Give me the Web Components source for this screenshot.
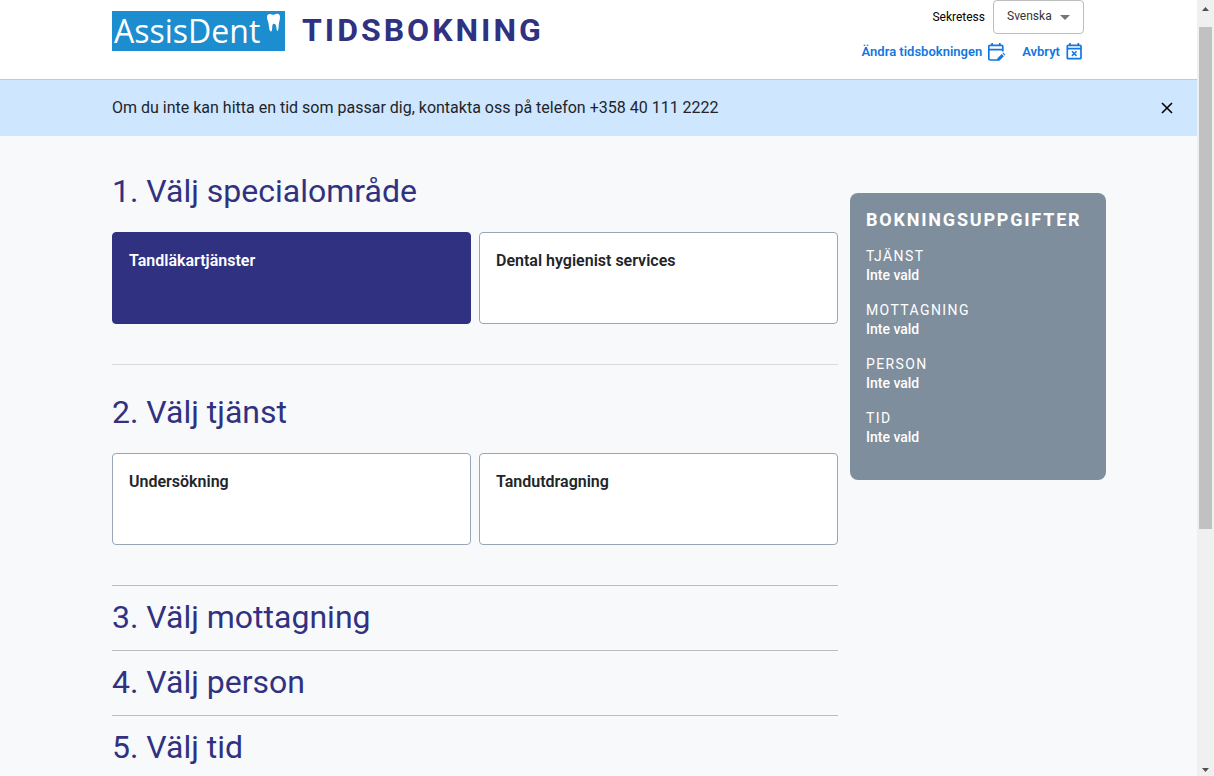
<!DOCTYPE html>
<html lang="sv">
<head>
<meta charset="utf-8">
<meta name="viewport" content="width=device-width, initial-scale=1">
<title>AssisDent Tidsbokning</title>
<style>
  html, body { margin: 0; height: 100%; }
  body { font-family: Roboto, sans-serif; color: #212529; background: #f8f9fb; overflow: hidden; }
</style>
</head>
<body>
<booking-app></booking-app>
<script>
const define = (name, html) => {
  const template = document.createElement('template');
  template.innerHTML = html;
  customElements.define(name, class extends HTMLElement {
    constructor() {
      super();
      this.attachShadow({ mode: 'open' }).append(template.content.cloneNode(true));
    }
  });
};

define('brand-logo', `
  <style>
    :host { display: flex; box-sizing: border-box; width: 173px; height: 40px; padding-left: 2px; background: #1c8dce; color: #fff; }
    span { font: 400 32px/40px "Open Sans", sans-serif; }
    svg { flex: none; margin: 2px 4px 0 auto; }
  </style>
  <span>AssisDent</span>
  <svg width="15" height="20" viewBox="0 0 15 20" fill="#fff" aria-hidden="true">
    <path d="M1 4C1 1 3 .4 5 1.200Q7.500 2.300 10 1C12.500 0 14.300 1.300 14 5C13.700 8 13 9 12.800 12C12.600 15 12.200 18 11.500 18C10.500 18 10.500 13 9.500 11.500C8.500 10.500 7 10.500 6.500 12C6 14 6.500 18.500 5 18.500C3.500 18.500 3 14 2.700 11.500C2.400 8.500 1 7 1 4Z"/>
  </svg>`);

define('action-link', `
  <style>
    :host { display: block; }
    a { display: flex; align-items: center; gap: 6px; color: #1277e1; font-size: 13px; font-weight: 600; line-height: 20px; text-decoration: none; white-space: nowrap; }
  </style>
  <a href="#"><slot></slot><slot name="icon"></slot></a>`);

define('language-select', `
  <style>
    :host { display: block; position: relative; width: 91px; }
    select { appearance: none; display: block; box-sizing: border-box; width: 100%; height: 34px; margin: 0; padding: 0 24px 2px 13px; border: 1px solid #bdbdbd; border-radius: 4px; background: #fff; color: #333; font: 12px Roboto, sans-serif; }
    svg { position: absolute; right: 14px; top: 15px; pointer-events: none; }
  </style>
  <select aria-label="Språk"><option>Svenska</option><option>Suomi</option><option>English</option></select>
  <svg width="10" height="5" viewBox="0 0 10 5" aria-hidden="true"><path d="M0 0h10L5 5z" fill="#757575"/></svg>`);

define('app-header', `
  <style>
    :host { display: flex; justify-content: space-between; align-items: flex-start; box-sizing: border-box; height: 80px; padding: 0 113px 0 112px; border-bottom: 1px solid #c8c8c8; background: #fff; }
    .brand { display: flex; gap: 17px; padding-top: 11px; }
    h1 { margin: 0; color: #303281; font-size: 32px; font-weight: 700; line-height: 38px; letter-spacing: 3px; }
    nav { display: flex; flex-direction: column; align-items: flex-end; gap: 8px; }
    .row { display: flex; align-items: center; gap: 8px; }
    .links { gap: 16px; }
    .privacy { color: #000; font-size: 12px; text-decoration: none; }
    svg { display: block; }
  </style>
  <div class="brand"><brand-logo></brand-logo><h1>TIDSBOKNING</h1></div>
  <nav>
    <div class="row"><a class="privacy" href="#">Sekretess</a><language-select></language-select></div>
    <div class="row links">
      <action-link>Ändra tidsbokningen
        <svg slot="icon" width="18" height="18" viewBox="0 0 18 18" fill="none" stroke="#1277e1" stroke-width="1.700" aria-hidden="true"><path d="M9 17H1.500Q0 17 0 15.800V3.300Q0 2.300 1.300 2.300H12.700Q14 2.300 14 3.500V8.500M0 6.700H14M3.300 0V2.500M11 0V2.500" transform="translate(.8)"/><path d="M9.200 17.700V15.500L13.700 11L15.900 13.200L11.400 17.700ZM14.400 10.300L15.200 9.500L17.400 11.700L16.600 12.500Z" fill="#1277e1" stroke="none"/></svg>
      </action-link>
      <action-link>Avbryt
        <svg slot="icon" width="18" height="18" viewBox="0 0 18 18" fill="none" stroke="#1277e1" stroke-width="1.700" aria-hidden="true"><rect x="1.300" y="2.300" width="13.700" height="13.400" rx="1"/><path d="M1.300 5.700H15M4 0V2.500M12.300 0V2.500"/><path d="M5.900 8.300L10.500 12.900M10.500 8.300L5.900 12.900" stroke-width="1.500"/></svg>
      </action-link>
    </div>
  </nav>`);

define('info-banner', `
  <style>
    :host { display: flex; justify-content: space-between; align-items: center; height: 56px; padding: 0 24px 0 112px; background: #cfe6ff; color: #212529; font-size: 16px; line-height: 24px; }
    button { display: block; padding: 0; border: 0; background: none; }
    svg { display: block; }
  </style>
  <slot></slot>
  <button aria-label="Stäng"><svg width="12" height="12" viewBox="0 0 12 12" stroke="#000" stroke-width="1.600" fill="none"><path d="M1 1l10 10M11 1L1 11"/></svg></button>`);

define('booking-step', `
  <style>
    :host { display: block; padding: 11px 0 13px; border-top: 1px solid var(--divider, #bdbdbd); }
    :host([open]) { padding: 27px 0 40px; }
    :host([first]) { border-top: 0; }
    h2 { margin: 0; color: #303281; font-size: 32px; font-weight: 400; line-height: 40px; }
    .options { display: none; }
    :host([open]) .options { display: grid; grid-template-columns: 1fr 1fr; gap: 8px; margin-top: 21px; }
  </style>
  <h2><slot name="title"></slot></h2>
  <div class="options"><slot></slot></div>`);

define('option-card', `
  <style>
    :host { display: block; }
    button { display: flex; align-items: flex-start; box-sizing: border-box; width: 100%; height: 92px; padding: 16px; border: 1px solid #98a6b5; border-radius: 4px; background: #fff; color: #212529; font: 600 16px/24px Roboto, sans-serif; text-align: left; }
    :host([selected]) button { border-color: #303281; background: #303281; color: #fff; }
  </style>
  <button><slot></slot></button>`);

define('summary-item', `
  <style>
    :host { display: block; margin-bottom: 16px; font-size: 14px; }
    .label { line-height: 20px; letter-spacing: .1em; }
    .value { font-weight: 500; line-height: 18px; }
  </style>
  <div class="label"><slot name="label"></slot></div>
  <div class="value"><slot></slot></div>`);

define('booking-summary', `
  <style>
    :host { display: block; padding: 15px 16px 18px; border-radius: 8px; background: #7f8e9d; color: #fff; }
    h2 { margin: 0 0 15px; font-size: 18px; font-weight: 700; line-height: 23px; letter-spacing: .1em; }
  </style>
  <h2>BOKNINGSUPPGIFTER</h2>
  <slot></slot>`);

define('scroll-rail', `
  <style>
    :host { display: flex; flex-direction: column; justify-content: space-between; align-items: center; box-sizing: border-box; padding: 7px 2px 4px; background: #f0f0f0; }
    .thumb { width: 13px; height: 65.6%; margin: 16px 0 auto; background: #c1c1c1; }
    svg { display: block; flex: none; }
  </style>
  <svg width="7" height="4" viewBox="0 0 7 4"><path d="M0 4h7L3.500 0z" fill="#505050"/></svg>
  <div class="thumb"></div>
  <svg width="7" height="4" viewBox="0 0 7 4"><path d="M0 0h7L3.500 4z" fill="#505050"/></svg>`);

define('booking-app', `
  <style>
    :host { display: grid; grid-template-columns: minmax(0, 1fr) 17px; height: 100%; }
    .page { overflow: hidden; }
    .layout { display: grid; grid-template-columns: minmax(0, 1fr) 256px; align-items: start; gap: 12px; padding: 8px 91px 8px 112px; }
    booking-summary { margin-top: 49px; }
    .soft { --divider: #d8dadd; }
  </style>
  <div class="page">
    <app-header></app-header>
    <info-banner>Om du inte kan hitta en tid som passar dig, kontakta oss på telefon +358 40 111 2222</info-banner>
    <div class="layout">
      <main>
        <booking-step open first><span slot="title">1. Välj specialområde</span>
          <option-card selected>Tandläkartjänster</option-card><option-card>Dental hygienist services</option-card></booking-step>
        <booking-step open class="soft"><span slot="title">2. Välj tjänst</span>
          <option-card>Undersökning</option-card><option-card>Tandutdragning</option-card></booking-step>
        <booking-step><span slot="title">3. Välj mottagning</span></booking-step>
        <booking-step><span slot="title">4. Välj person</span></booking-step>
        <booking-step><span slot="title">5. Välj tid</span></booking-step>
      </main>
      <booking-summary>
        <summary-item><span slot="label">TJÄNST</span>Inte vald</summary-item>
        <summary-item><span slot="label">MOTTAGNING</span>Inte vald</summary-item>
        <summary-item><span slot="label">PERSON</span>Inte vald</summary-item>
        <summary-item><span slot="label">TID</span>Inte vald</summary-item>
      </booking-summary>
    </div>
  </div>
  <scroll-rail aria-hidden="true"></scroll-rail>`);
</script>
</body>
</html>
